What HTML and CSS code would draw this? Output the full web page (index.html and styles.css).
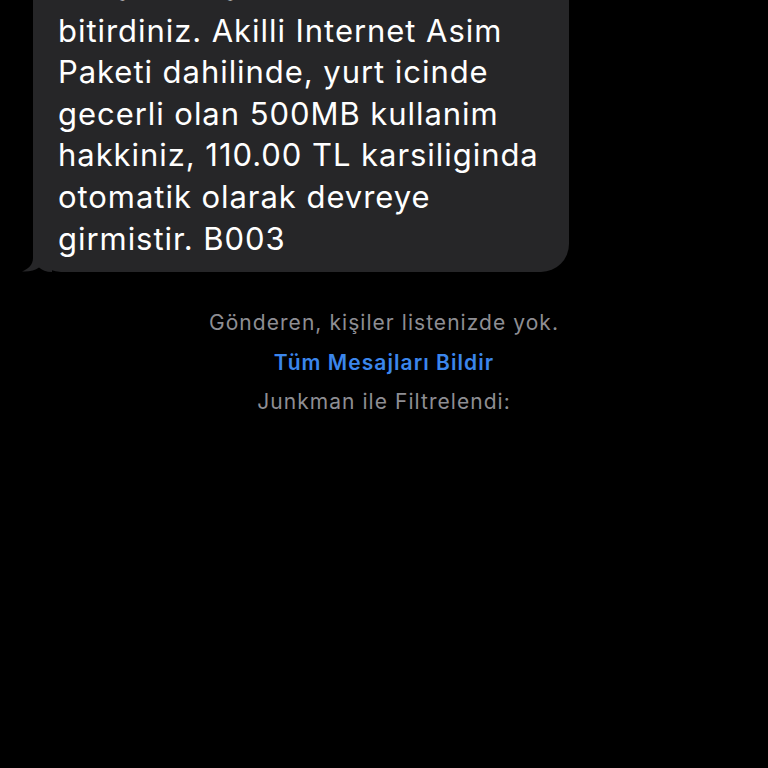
FILE: index.html
```html
<!DOCTYPE html>
<html lang="tr">
<head>
<meta charset="utf-8">
<link rel="stylesheet" href="styles.css">
</head>
<body>
<div class="screen">
  <div class="bubble">
    <p class="msg">Kullanim Hakkinizin %100'unu<br>bitirdiniz. Akilli Internet Asim<br>Paketi dahilinde, yurt icinde<br>gecerli olan 500MB kullanim<br>hakkiniz, 110.00 TL karsiliginda<br>otomatik olarak devreye<br>girmistir. B003</p>
    <svg class="tail" width="30" height="30" viewBox="0 0 30 30"><path d="M11 0 L11 16 C11 23 6 27 0 29.5 C7 30 13 28.5 17 25.5 C20 28 24 30 30 30 L30 0 Z" fill="#262628"/></svg>
  </div>
  <div class="notice">
    <p class="info">Gönderen, kişiler listenizde yok.</p>
    <p class="link">Tüm Mesajları Bildir</p>
    <p class="info">Junkman ile Filtrelendi:</p>
  </div>
</div>
</body>
</html>
```
FILE: styles.css
```css
html, body {
  margin: 0;
  padding: 0;
  background: #000;
  width: 768px;
  height: 768px;
  overflow: hidden;
}
.screen {
  font-family: Inter, "Liberation Sans", sans-serif;
}
.bubble {
  position: relative;
  margin: -44px 0 0 33px;
  width: 536px;
  box-sizing: border-box;
  padding: 12px 10px 13px 25px;
  background: #262628;
  border-radius: 28px;
}
.msg {
  margin: 0;
  color: #fff;
  font-size: 31px;
  line-height: 41.6px;
  letter-spacing: 0.95px;
  white-space: nowrap;
}
.tail {
  position: absolute;
  left: -11px;
  bottom: 0;
  display: block;
}
.notice {
  display: flex;
  flex-direction: column;
  align-items: center;
  margin-top: 31px;
}
.notice p {
  margin: 0;
  font-size: 21px;
  line-height: 39.5px;
  letter-spacing: 1.05px;
}
.info {
  color: #8e8e93;
}
.link {
  color: #3b86ec;
  font-weight: 600;
  letter-spacing: 0.95px;
}
```
